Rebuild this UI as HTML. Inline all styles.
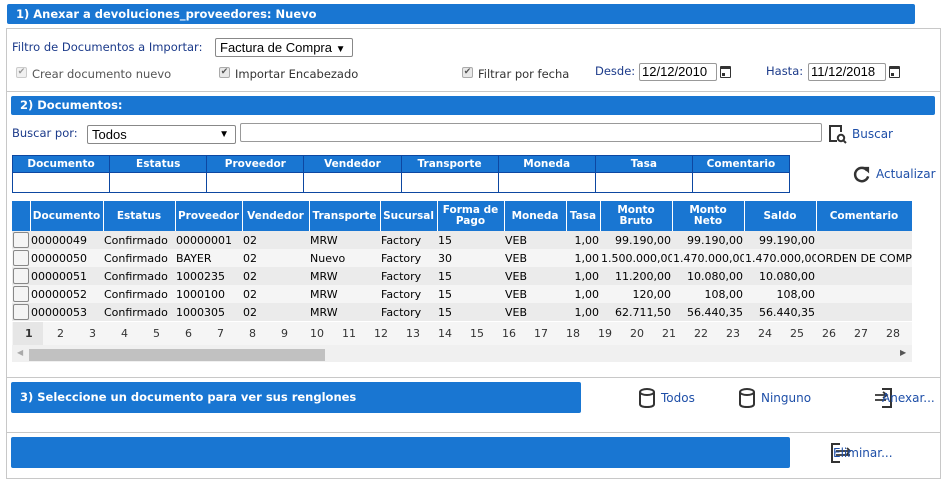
<!DOCTYPE html>
<html><head><meta charset="utf-8"><style>
*{box-sizing:border-box;margin:0;padding:0}
body{width:949px;height:490px;background:#fff;font-family:"DejaVu Sans","Liberation Sans",sans-serif;font-size:11.5px;color:#1b3a8a;position:relative;overflow:hidden}
.a{position:absolute}
.bar{position:absolute;background:#1976d2;color:#fff;font-weight:bold;font-size:11.5px;border-radius:2px;padding-left:9px;line-height:20px}
.hl{position:absolute;height:1px;background:#c8c8c8}
.vl{position:absolute;width:1px;background:#c8c8c8}
.cb{position:absolute;width:11px;height:11px;border:1px solid #aaa;border-radius:2px;background:#e8e8e8;font-size:9px;line-height:9px;text-align:center;color:#555}
.sel{position:absolute;border:1px solid #888;border-radius:2px;background:#fff;color:#000;font-size:13px;font-family:"Liberation Sans",sans-serif;padding-left:4px}
.date{position:absolute;border:1px solid #999;border-radius:2px;background:#fff;color:#000;font-size:13px;font-family:"Liberation Sans",sans-serif;padding-left:2px;height:18px;line-height:16px}
table{border-collapse:collapse}
.ft td{border:1px solid #0d47a1;height:20px;width:97px}
.ft th{background:#1976d2;color:#fff;font-size:10.5px;border:1px solid #0d47a1;height:17px}
.g td{height:18px;color:#000;font-size:11px;white-space:nowrap;overflow:hidden;padding:0 1px}
.g th{background:#1976d2;color:#fff;font-size:10.5px;line-height:11px;border-right:1px solid #fff;height:30px;white-space:nowrap;overflow:hidden}
.r{text-align:right}
.g tr:nth-child(odd) td{background:#ebebeb}
.g tr:nth-child(even) td{background:#f5f5f5}
.chk{display:inline-block;width:16px;height:16px;border:1px solid #888;border-radius:2px;background:#f4f4f4;vertical-align:middle}
.lnk{position:absolute;color:#1e4fa8;font-size:12px;font-family:"DejaVu Sans",sans-serif}
.cal{position:absolute;width:11px;height:12px;border:1.5px solid #333;border-top-width:3px;border-radius:1px}
.cal:after{content:"";position:absolute;left:1px;bottom:1px;width:3px;height:3px;background:#333}
</style></head><body>
<div class="bar" style="left:7px;top:4px;width:908px;height:20px">1) Anexar a devoluciones_proveedores: Nuevo</div>
<div class="hl" style="left:6px;top:28px;width:935px"></div>
<div class="vl" style="left:6px;top:28px;height:451px"></div>
<div class="vl" style="left:940px;top:28px;height:451px"></div>
<div class="hl" style="left:6px;top:478px;width:935px"></div>

<div class="a" style="left:12px;top:40px">Filtro de Documentos a Importar:</div>
<div class="sel" style="left:215px;top:38px;width:138px;height:19px;line-height:17px">Factura de Compra <span style="font-size:10px">▼</span></div>
<div class="cb" style="left:16px;top:67px;opacity:.6">✔</div><div class="a" style="left:32px;top:67px;color:#555">Crear documento nuevo</div>
<div class="cb" style="left:219px;top:67px">✔</div><div class="a" style="left:235px;top:67px;color:#333">Importar Encabezado</div>
<div class="cb" style="left:462px;top:67px">✔</div><div class="a" style="left:478px;top:67px;color:#333">Filtrar por fecha</div>
<div class="a" style="left:595px;top:64px">Desde:</div>
<div class="date" style="left:639px;top:63px;width:78px">12/12/2010</div>
<div class="cal" style="left:720px;top:66px"></div>
<div class="a" style="left:766px;top:64px">Hasta:</div>
<div class="date" style="left:808px;top:63px;width:78px">11/12/2018</div>
<div class="cal" style="left:889px;top:66px"></div>
<div class="hl" style="left:6px;top:91px;width:935px"></div>

<div class="bar" style="left:11px;top:96px;width:924px;height:19px;line-height:19px">2) Documentos:</div>
<div class="a" style="left:12px;top:126px">Buscar por:</div>
<div class="sel" style="left:87px;top:125px;width:149px;height:19px;line-height:17px">Todos<span style="position:absolute;right:6px;font-size:10px">▼</span></div>
<div class="a" style="left:240px;top:123px;width:582px;height:19px;border:1px solid #999;border-radius:2px"></div>
<svg class="a" style="left:828px;top:124px" width="20" height="20" viewBox="0 0 20 20"><path d="M9 17H2V2h11v6" fill="none" stroke="#333" stroke-width="2"/><circle cx="13" cy="14" r="3.2" fill="none" stroke="#333" stroke-width="2"/><path d="M15.3 16.3L18 19" stroke="#333" stroke-width="2"/></svg>
<div class="lnk" style="left:852px;top:127px">Buscar</div>

<table class="ft a" style="left:12px;top:155px;width:778px"><tr><th>Documento</th><th>Estatus</th><th>Proveedor</th><th>Vendedor</th><th>Transporte</th><th>Moneda</th><th>Tasa</th><th>Comentario</th></tr><tr><td></td><td></td><td></td><td></td><td></td><td></td><td></td><td></td></tr></table>
<svg class="a" style="left:852px;top:165px" width="19" height="19" viewBox="0 0 20 20"><path d="M16 6A7 7 0 1 0 17 12" fill="none" stroke="#333" stroke-width="2.6"/><path d="M11 2h7v7z" fill="#333"/></svg>
<div class="lnk" style="left:876px;top:167px">Actualizar</div>

<table class="g a" style="left:12px;top:201px;width:900px;table-layout:fixed">
<colgroup><col style="width:18px"><col style="width:73px"><col style="width:72px"><col style="width:67px"><col style="width:67px"><col style="width:71px"><col style="width:57px"><col style="width:67px"><col style="width:62px"><col style="width:34px"><col style="width:72px"><col style="width:72px"><col style="width:72px"><col style="width:96px"></colgroup>
<thead><tr><th></th><th>Documento</th><th>Estatus</th><th>Proveedor</th><th>Vendedor</th><th>Transporte</th><th>Sucursal</th><th>Forma de<br>Pago</th><th>Moneda</th><th>Tasa</th><th>Monto<br>Bruto</th><th>Monto<br>Neto</th><th>Saldo</th><th>Comentario</th></tr></thead>
<tbody>
<tr><td><span class="chk"></span></td><td>00000049</td><td>Confirmado</td><td>00000001</td><td>02</td><td>MRW</td><td>Factory</td><td>15</td><td>VEB</td><td class="r">1,00</td><td class="r">99.190,00</td><td class="r">99.190,00</td><td class="r">99.190,00</td><td></td></tr>
<tr><td><span class="chk"></span></td><td>00000050</td><td>Confirmado</td><td>BAYER</td><td>02</td><td>Nuevo</td><td>Factory</td><td>30</td><td>VEB</td><td class="r">1,00</td><td>1.500.000,00</td><td>1.470.000,00</td><td>1.470.000,00</td><td>ORDEN DE COMPRA</td></tr>
<tr><td><span class="chk"></span></td><td>00000051</td><td>Confirmado</td><td>1000235</td><td>02</td><td>MRW</td><td>Factory</td><td>15</td><td>VEB</td><td class="r">1,00</td><td class="r">11.200,00</td><td class="r">10.080,00</td><td class="r">10.080,00</td><td></td></tr>
<tr><td><span class="chk"></span></td><td>00000052</td><td>Confirmado</td><td>1000100</td><td>02</td><td>MRW</td><td>Factory</td><td>15</td><td>VEB</td><td class="r">1,00</td><td class="r">120,00</td><td class="r">108,00</td><td class="r">108,00</td><td></td></tr>
<tr><td><span class="chk"></span></td><td>00000053</td><td>Confirmado</td><td>1000305</td><td>02</td><td>MRW</td><td>Factory</td><td>15</td><td>VEB</td><td class="r">1,00</td><td class="r">62.711,50</td><td class="r">56.440,35</td><td class="r">56.440,35</td><td></td></tr>
</tbody></table>
<div class="a" style="left:12px;top:322px;width:900px;height:23px;background:#f5f5f5"></div>
<div class="a" style="left:13px;top:322px;width:30px;height:23px;background:#e6e6e6"></div>
<div class="a" id="pg" style="left:12px;top:327px;color:#333;font-size:11px"></div>
<div class="a" style="left:12px;top:345px;width:900px;height:17px;background:#f0f0f0"></div>
<div class="a" style="left:29px;top:349px;width:296px;height:12px;background:#c1c1c1"></div>
<div class="a" style="left:17px;top:348px;color:#aaa;font-size:8px">◀</div>
<div class="a" style="left:900px;top:348px;color:#555;font-size:8px">▶</div>
<div class="hl" style="left:6px;top:377px;width:935px"></div>

<div class="bar" style="left:11px;top:382px;width:570px;height:31px;line-height:31px">3) Seleccione un documento para ver sus renglones</div>
<svg class="a" style="left:638px;top:387px" width="18" height="22" viewBox="0 0 18 22"><ellipse cx="9" cy="5" rx="7" ry="3" fill="none" stroke="#333" stroke-width="2"/><path d="M2 5v12c0 2 3 3 7 3s7-1 7-3V5" fill="none" stroke="#333" stroke-width="2"/></svg>
<div class="lnk" style="left:661px;top:391px">Todos</div>
<svg class="a" style="left:738px;top:387px" width="18" height="22" viewBox="0 0 18 22"><ellipse cx="9" cy="5" rx="7" ry="3" fill="none" stroke="#333" stroke-width="2"/><path d="M2 5v12c0 2 3 3 7 3s7-1 7-3V5" fill="none" stroke="#333" stroke-width="2"/></svg>
<div class="lnk" style="left:761px;top:391px">Ninguno</div>
<svg class="a" style="left:874px;top:387px" width="20" height="22" viewBox="0 0 20 22"><path d="M8 2h9v18H8" fill="none" stroke="#333" stroke-width="2"/><path d="M1 8h11M1 13h11M9 5l4 3-4 3" fill="none" stroke="#333" stroke-width="1.8"/></svg>
<div class="lnk" style="left:882px;top:391px">Anexar...</div>
<div class="hl" style="left:6px;top:432px;width:935px"></div>

<div class="bar" style="left:11px;top:437px;width:779px;height:31px"></div>
<svg class="a" style="left:830px;top:442px" width="24" height="22" viewBox="0 0 24 22"><path d="M10 2H2v18h8" fill="none" stroke="#333" stroke-width="2"/><path d="M6 9h14M6 13h14M17 6l3 3-3 3" fill="none" stroke="#333" stroke-width="1.8"/></svg>
<div class="lnk" style="left:833px;top:446px">Eliminar...</div>
<script>
var s='';for(var i=1;i<=28;i++){s+='<span style="position:absolute;left:'+(13+(i-1)*32-(i>9?3:0))+'px;'+(i==1?'font-weight:bold':'')+'">'+i+'</span>';}
document.getElementById('pg').innerHTML=s;
</script>
</body></html>
